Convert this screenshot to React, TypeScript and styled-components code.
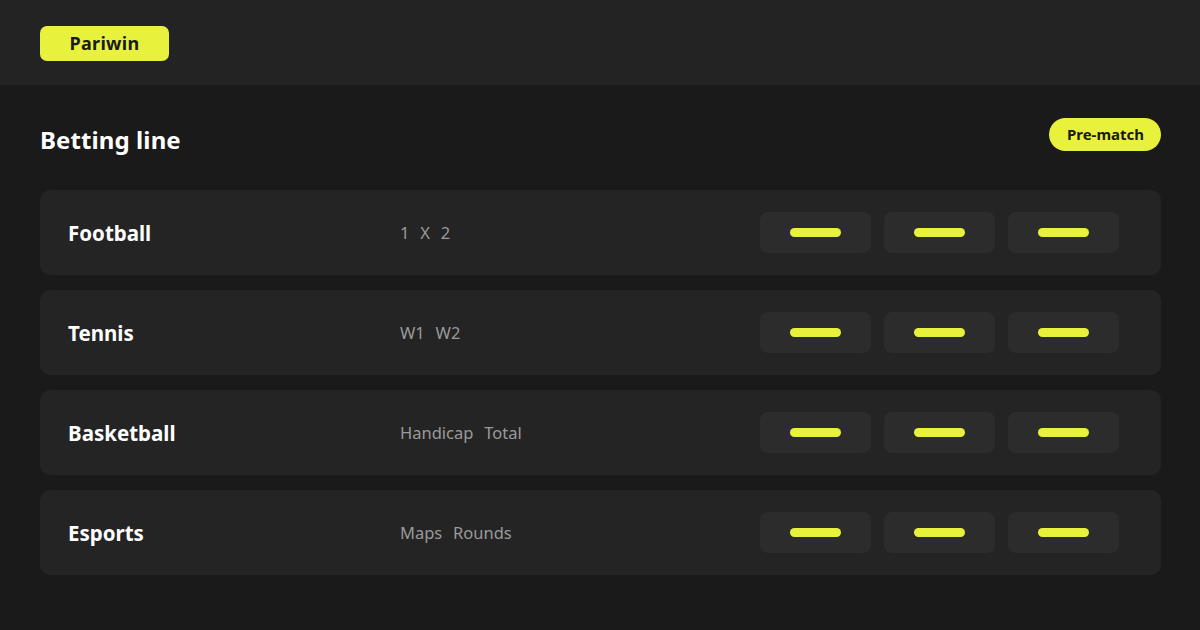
import React from 'react';
import styled, { createGlobalStyle } from 'styled-components';

const GlobalStyle = createGlobalStyle`
    html, body {
        margin: 0;
        padding: 0;
        background: #1a1a1a;
        font-family: "Noto Sans", "Open Sans", sans-serif;
    }
`;

const PageDiv = styled.div`
    width: 1200px;
    height: 630px;
    background: #1a1a1a;
    display: flex;
    flex-direction: column;
`;

const HeaderDiv = styled.div`
    height: 85px;
    background: #232323;
    display: flex;
    align-items: center;
    padding: 0 40px;
    box-sizing: border-box;
`;

const LogoBadge = styled.div`
    width: 129px;
    height: 35px;
    margin-top: 1px;
    border-radius: 7px;
    background: #e8f23c;
    color: #1a1a1a;
    font-weight: 700;
    font-size: 18px;
    letter-spacing: 0.3px;
    display: flex;
    align-items: center;
    justify-content: center;
`;

const MainDiv = styled.div`
    padding: 33px 39px 0 40px;
    display: flex;
    flex-direction: column;
`;

const TitleRow = styled.div`
    display: flex;
    justify-content: space-between;
    align-items: center;
    height: 44px;
    margin-bottom: 28px;
`;

const Title = styled.h1`
    margin: -2px 0 0 0;
    color: #ffffff;
    font-size: 24px;
    font-weight: 700;
    letter-spacing: 0.1px;
`;

const Pill = styled.div`
    height: 33px;
    padding: 0 17px 0 18px;
    border-radius: 17px;
    background: #e8f23c;
    color: #1a1a1a;
    font-weight: 700;
    font-size: 15px;
    display: flex;
    align-items: center;
    margin-top: -12px;
`;

const RowList = styled.div`
    display: flex;
    flex-direction: column;
    gap: 15px;
`;

const SportRow = styled.div`
    height: 85px;
    border-radius: 10px;
    background: #242424;
    display: grid;
    grid-template-columns: 332px 1fr auto;
    align-items: center;
    padding: 0 42px 0 28px;
`;

const SportName = styled.div`
    color: #ffffff;
    font-weight: 700;
    font-size: 20.5px;
`;

const Markets = styled.div`
    color: #9a9a9a;
    font-size: 16.5px;
    word-spacing: 6.5px;
`;

const OddsGroup = styled.div`
    display: flex;
    gap: 13px;
`;

const OddButton = styled.div`
    width: 111px;
    height: 41px;
    border-radius: 8px;
    background: #2c2c2c;
    display: flex;
    align-items: center;
    justify-content: center;
`;

const OddDash = styled.span`
    width: 51px;
    height: 9px;
    border-radius: 5px;
    background: #e8f23c;
`;

const sports = [
    { name: 'Football', markets: '1 X 2' },
    { name: 'Tennis', markets: 'W1 W2' },
    { name: 'Basketball', markets: 'Handicap Total' },
    { name: 'Esports', markets: 'Maps Rounds' },
];

const App: React.FC = () => {
    return (
        <PageDiv>
            <GlobalStyle />
            <HeaderDiv>
                <LogoBadge>Pariwin</LogoBadge>
            </HeaderDiv>
            <MainDiv>
                <TitleRow>
                    <Title>Betting line</Title>
                    <Pill>Pre-match</Pill>
                </TitleRow>
                <RowList>
                    {sports.map((s) => (
                        <SportRow key={s.name}>
                            <SportName>{s.name}</SportName>
                            <Markets>{s.markets}</Markets>
                            <OddsGroup>
                                {[0, 1, 2].map((i) => (
                                    <OddButton key={i}><OddDash /></OddButton>
                                ))}
                            </OddsGroup>
                        </SportRow>
                    ))}
                </RowList>
            </MainDiv>
        </PageDiv>
    );
};

export default App;
